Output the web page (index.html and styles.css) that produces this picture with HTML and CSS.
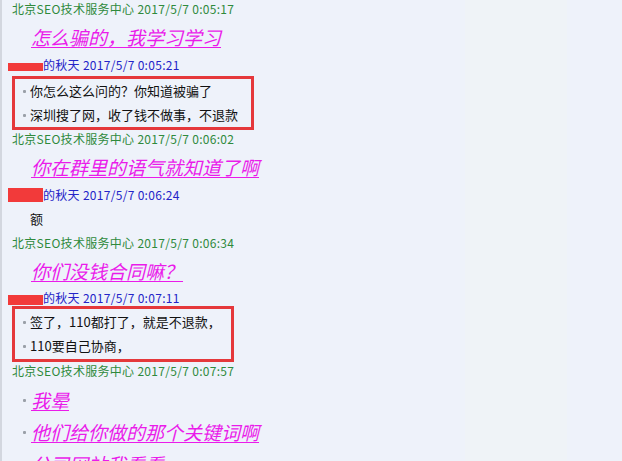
FILE: index.html
```html
<!DOCTYPE html>
<html lang="zh-CN">
<head>
<meta charset="utf-8">
<title>聊天记录</title>
<link rel="stylesheet" href="styles.css">
</head>
<body>
<div class="chat">
  <div class="hdr hdr-seo">北京SEO技术服务中心 2017/5/7 0:05:17</div>
  <div class="big">怎么骗的，我学习学习</div>

  <div class="hdr hdr-user"><span class="mask mask-a"></span>的秋天 2017/5/7 0:05:21</div>
  <div class="box box-a">
    <div class="line bullet">你怎么这么问的？你知道被骗了</div>
    <div class="line bullet">深圳搜了网，收了钱不做事，不退款</div>
  </div>

  <div class="hdr hdr-seo">北京SEO技术服务中心 2017/5/7 0:06:02</div>
  <div class="big">你在群里的语气就知道了啊</div>

  <div class="hdr hdr-user"><span class="mask mask-b"></span>的秋天 2017/5/7 0:06:24</div>
  <div class="plain">额</div>

  <div class="hdr hdr-seo">北京SEO技术服务中心 2017/5/7 0:06:34</div>
  <div class="big">你们没钱合同嘛？</div>

  <div class="hdr hdr-user hdr-tight"><span class="mask mask-c"></span>的秋天 2017/5/7 0:07:11</div>
  <div class="box box-b">
    <div class="line bullet">签了，110都打了，就是不退款，</div>
    <div class="line bullet">110要自己协商，</div>
  </div>

  <div class="hdr hdr-seo">北京SEO技术服务中心 2017/5/7 0:07:57</div>
  <div class="biglist">
    <div class="bigitem bullet"><span class="u">我晕</span></div>
    <div class="bigitem bullet"><span class="u">他们给你做的那个关键词啊</span></div>
    <div class="bigitem bullet"><span class="u">公司网站我看看</span></div>
  </div>
</div>
</body>
</html>
```
FILE: styles.css
```css
html, body {
  margin: 0;
  padding: 0;
}
body {
  width: 622px;
  height: 461px;
  overflow: hidden;
  box-sizing: border-box;
  border-left: 2px solid #d3d7df;
  background: linear-gradient(to right, #eef2fa 0, #eef2fa 465px, #eff3f7 465px, #eff3f7 567px, #eef2fa 567px);
  font-family: "Noto Sans CJK SC", "Noto Sans", sans-serif;
  color: #111;
}
.chat {
  display: flex;
  flex-direction: column;
  align-items: flex-start;
}
.hdr {
  font-size: 12px;
  line-height: 18px;
  height: 18px;
  white-space: nowrap;
  letter-spacing: 0.3px;
}
.hdr-seo {
  color: #2f8a3c;
  padding-left: 10px;
}
.hdr-user {
  color: #2424c8;
  padding-left: 6px;
  display: flex;
  align-items: center;
}
.hdr-tight {
  height: 16px;
}
.mask {
  display: inline-block;
  width: 35px;
  background: #f23a3a;
}
.mask-a { height: 8px; margin-top: 4px; }
.mask-b { height: 14px; }
.mask-c { height: 10px; margin-top: 4px; }
.big {
  font-size: 19px;
  line-height: 28px;
  font-style: italic;
  text-decoration: underline;
  text-decoration-thickness: 1px;
  text-underline-offset: 2px;
  color: #ea1cea;
  padding-left: 29px;
  margin: 5px 0;
  white-space: nowrap;
}
.plain {
  font-size: 13px;
  line-height: 24px;
  padding-left: 28px;
  margin: 3px 0;
}
.box {
  border: 3px solid #e5383b;
  margin-left: 10px;
  box-sizing: border-box;
  padding-left: 15px;
}
.box-a {
  width: 242px;
  margin-top: 2px;
}
.box-a .line { line-height: 24px; }
.box-b {
  width: 222px;
  padding-top: 1px;
  padding-bottom: 1px;
}
.box-b .line { line-height: 24px; }
.line {
  font-size: 13px;
  white-space: nowrap;
}
.bullet {
  position: relative;
}
.bullet::before {
  content: "";
  position: absolute;
  left: -7px;
  top: 50%;
  width: 3px;
  height: 3px;
  margin-top: -1px;
  background: #9aa0a8;
  border-radius: 1px;
}
.biglist {
  margin-top: 4px;
  padding-left: 29px;
}
.bigitem {
  font-size: 19px;
  line-height: 32px;
  font-style: italic;
  color: #ea1cea;
  white-space: nowrap;
}
.bigitem .u {
  text-decoration: underline;
  text-decoration-thickness: 1px;
  text-underline-offset: 2px;
}
.bigitem.bullet::before {
  left: -8px;
}
```
